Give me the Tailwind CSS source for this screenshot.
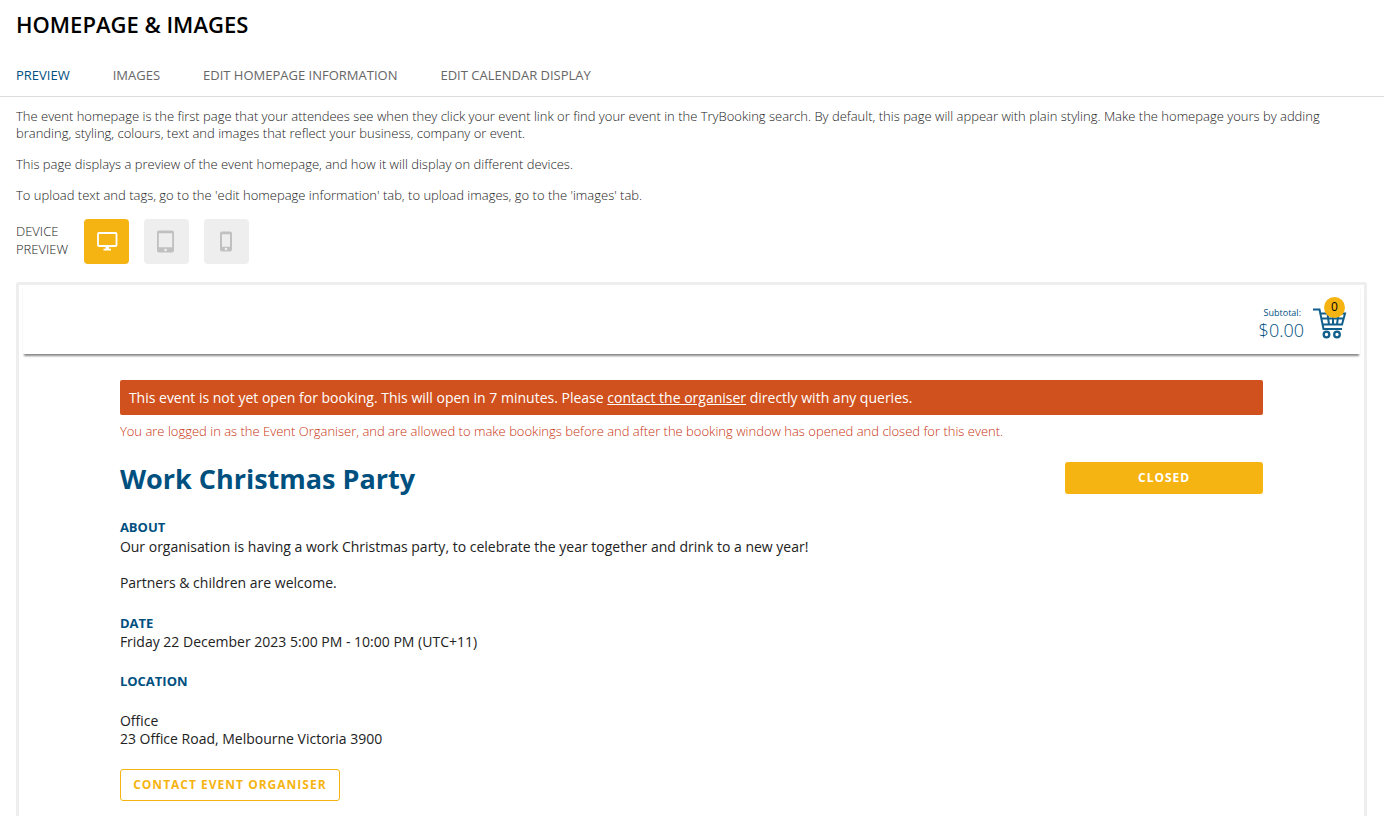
<!DOCTYPE html>
<html lang="en">
<head>
  <meta charset="UTF-8">
  <meta name="viewport" content="width=device-width, initial-scale=1">
  <title>Homepage &amp; Images</title>
  <script src="https://cdn.jsdelivr.net/npm/@tailwindcss/browser@4"></script>
</head>
<body class="bg-white font-['Open_Sans',sans-serif] text-[13px] text-[#222] overflow-x-hidden">
  <header class="border-b border-[#ddd]">
    <h1 class="px-4 pt-2 text-[22px] leading-8 font-semibold text-black">HOMEPAGE &amp; IMAGES</h1>
    <nav class="flex gap-[43px] px-4 pt-[26px] pb-3 leading-[18px] text-[#666]">
      <a href="#" class="text-[#00507f]">PREVIEW</a>
      <a href="#">IMAGES</a>
      <a href="#">EDIT HOMEPAGE INFORMATION</a>
      <a href="#">EDIT CALENDAR DISPLAY</a>
    </nav>
  </header>

  <main class="pl-4 pr-[17px] pt-[11px]">
    <div class="space-y-[14px] font-light leading-[17px]">
      <p>The event homepage is the first page that your attendees see when they click your event link or find your event in the TryBooking search. By default, this page will appear with plain styling. Make the homepage yours by adding branding, styling, colours, text and images that reflect your business, company or event.</p>
      <p>This page displays a preview of the event homepage, and how it will display on different devices.</p>
      <p>To upload text and tags, go to the 'edit homepage information' tab, to upload images, go to the 'images' tab.</p>
    </div>

    <div class="flex items-center mt-[15px]">
      <div class="w-[68px] pb-1 font-light leading-[18px]">DEVICE<br>PREVIEW</div>
      <div class="flex gap-[15px]">
        <button type="button" aria-label="Desktop" class="size-[45px] rounded bg-[#f6b413] flex items-center justify-center">
          <svg width="22" height="20" viewBox="0 0 22 20" fill="none">
            <rect x="2" y="1" width="18.500" height="13" rx="1" stroke="#fff" stroke-width="1.800"/>
            <path d="M9.500 14.500h3.500v2.200h2V18.500h-7.500V16.700h2z" fill="#fff"/>
          </svg>
        </button>
        <button type="button" aria-label="Tablet" class="size-[45px] rounded bg-[#eee] flex items-center justify-center">
          <svg width="19" height="24" viewBox="0 0 19 24">
            <path fill="#c0c0c0" fill-rule="evenodd" d="M2 .5h13a2 2 0 0 1 2 2v18a2 2 0 0 1-2 2H2a2 2 0 0 1-2-2v-18a2 2 0 0 1 2-2zM1.800 3.200v14h13.400v-14z"/>
            <circle cx="8.500" cy="20" r="1.300" fill="#eee"/>
          </svg>
        </button>
        <button type="button" aria-label="Phone" class="size-[45px] rounded bg-[#eee] flex items-center justify-center">
          <svg width="14" height="22" viewBox="0 0 14 22">
            <path fill="#c0c0c0" fill-rule="evenodd" d="M2 .5h8a2 2 0 0 1 2 2v16a2 2 0 0 1-2 2H2a2 2 0 0 1-2-2v-16a2 2 0 0 1 2-2zM2 3.300v12.500h8V3.300z"/>
            <circle cx="6" cy="18" r="1.300" fill="#eee"/>
          </svg>
        </button>
      </div>
    </div>

    <section class="mt-[18px] border-3 border-b-0 border-[#eee] rounded-t-[3px] pb-10">
      <div class="mx-1 h-[69px] flex items-start justify-end pt-3 pr-[13px] shadow-[0_3px_2px_-1px_#888]">
        <div class="text-right text-[#00507f] pt-[11px] mr-[9px]">
          <div class="text-[9px] leading-[10px] pr-[3px]">Subtotal:</div>
          <div class="text-[18px] leading-6 font-light">$0.00</div>
        </div>
        <div class="relative">
          <svg width="34" height="42" viewBox="0 0 34 42" fill="none" stroke="#125f8b" stroke-width="2">
            <path d="M0 12.500h6.500L10.500 32h18.500M8 16.500h24l-3 11H9.500M8.500 21.500h22M14.500 16.500l1.500 11M20 16.500v11M25.500 16.500l-1.500 11"/>
            <circle cx="13.500" cy="37.500" r="2.800" stroke-width="2.300"/>
            <circle cx="24" cy="37.500" r="2.800" stroke-width="2.300"/>
          </svg>
          <span class="absolute left-[11px] top-0 size-[21px] rounded-full bg-[#f6b413] text-black text-[12px] leading-[20px] text-center">0</span>
        </div>
      </div>

      <div class="w-[85%] mx-auto pt-[26px] text-[14px] leading-[18px] text-[#222]">
        <p class="bg-[#d0511d] text-white font-medium rounded-[2px] px-[9px] py-2 leading-[19px]">This event is not yet open for booking. This will open in 7 minutes. Please <a href="#" class="underline">contact the organiser</a> directly with any queries.</p>
        <p class="mt-[7px] text-[13px] font-light text-[#c8330f]">You are logged in as the Event Organiser, and are allowed to make bookings before and after the booking window has opened and closed for this event.</p>

        <div class="flex items-start justify-between mt-[21px]">
          <h2 class="text-[27px] leading-9 font-bold text-[#00507f]">Work Christmas Party</h2>
          <button type="button" class="mt-px w-[198px] h-8 rounded-[3px] bg-[#f6b413] text-white text-[12px] font-bold tracking-[1px]">CLOSED</button>
        </div>

        <h3 class="mt-[21px] text-[13px] font-bold text-[#00507f]">ABOUT</h3>
        <p class="mt-[2px]">Our organisation is having a work Christmas party, to celebrate the year together and drink to a new year!</p>
        <p class="mt-[18px]">Partners &amp; children are welcome.</p>

        <h3 class="mt-[22px] text-[13px] font-bold text-[#00507f]">DATE</h3>
        <p class="mt-px">Friday 22 December 2023 5:00 PM - 10:00 PM (UTC+11)</p>

        <h3 class="mt-[21px] text-[13px] font-bold text-[#00507f]">LOCATION</h3>
        <p class="mt-[22px]">Office<br>23 Office Road, Melbourne Victoria 3900</p>

        <button type="button" class="mt-[21px] w-[220px] h-8 rounded-[3px] border border-[#f6b413] text-[#f6b413] text-[12px] font-bold tracking-[1px]">CONTACT EVENT ORGANISER</button>
      </div>
    </section>
  </main>
</body>
</html>
